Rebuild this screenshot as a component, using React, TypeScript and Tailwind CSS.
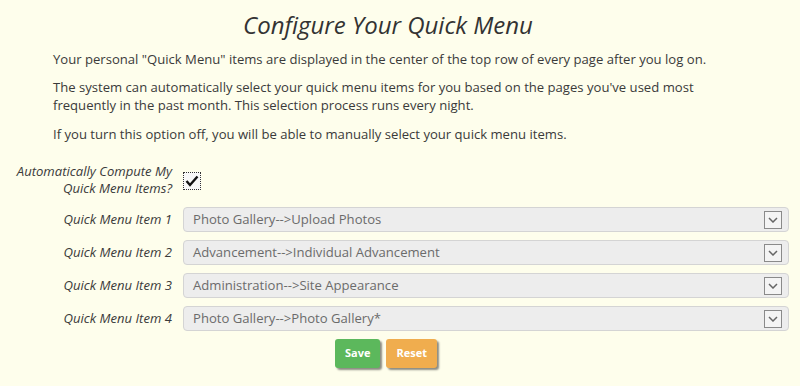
import React from 'react'

const items = [
  'Photo Gallery-->Upload Photos',
  'Advancement-->Individual Advancement',
  'Administration-->Site Appearance',
  'Photo Gallery-->Photo Gallery*',
]

function SelectBox({ value }: { value: string }) {
  return (
    <div className="flex-1 h-[25px] flex items-center justify-between rounded-[4px] border border-[#d4d4d4] bg-[#ededed] pl-[9px] pr-[6px]">
      <span className="text-[13.1px] text-[#6b6b6b]">{value}</span>
      <span className="w-[18px] h-[18px] border border-[#8a8a8a] bg-[#f4f4f4] flex items-center justify-center">
        <svg width="10" height="6" viewBox="0 0 10 6">
          <path d="M1 1 L5 5 L9 1" fill="none" stroke="#666" strokeWidth="1.5" />
        </svg>
      </span>
    </div>
  )
}

export default function App() {
  return (
    <div className="w-[800px] h-[386px] bg-[#fefeec] text-[#3a3a3a] overflow-hidden" style={{ fontFamily: '"Open Sans", "DejaVu Sans", sans-serif' }}>
      <h1 className="pt-[10px] pr-[24px] text-center italic text-[24px] leading-[30px] text-[#333]">Configure Your Quick Menu</h1>
      <div className="pl-[53px] pr-[60px] text-[13.1px] leading-[18px]">
        <p className="mt-[10px]">Your personal "Quick Menu" items are displayed in the center of the top row of every page after you log on.</p>
        <p className="mt-[10px] w-[670px]">The system can automatically select your quick menu items for you based on the pages you've used most frequently in the past month. This selection process runs every night.</p>
        <p className="mt-[11px]">If you turn this option off, you will be able to manually select your quick menu items.</p>
      </div>

      <div className="mt-[20px] pr-[11px]">
        <div className="flex items-start">
          <div className="w-[172px] text-right italic text-[13.1px] leading-[17px]">
            Automatically Compute My<br />Quick Menu Items?
          </div>
          <div className="ml-[11px] mt-[9px] w-[18px] h-[18px] border border-dotted border-[#333] bg-[#f8f8f8] flex items-center justify-center">
            <svg width="14" height="12" viewBox="0 0 14 12">
              <path d="M1.5 6 L5 10 L12.5 1.5" fill="none" stroke="#111" strokeWidth="2.4" />
            </svg>
          </div>
        </div>

        <div className="mt-[10px] flex flex-col gap-[8px]">
          {items.map((v, i) => (
            <div key={i} className="flex items-center">
              <div className="w-[172px] text-right italic text-[13.1px]">Quick Menu Item {i + 1}</div>
              <div className="ml-[11px] flex-1 flex">
                <SelectBox value={v} />
              </div>
            </div>
          ))}
        </div>

        <div className="mt-[8px] flex gap-[6px] pl-[335px]">
          <button className="h-[29px] px-[10px] rounded-[3px] bg-[#5cb85c] text-white text-[11px] font-bold shadow-[2px_2px_2px_rgba(0,0,0,0.45)]">Save</button>
          <button className="h-[29px] px-[10px] rounded-[3px] bg-[#f0ad4e] text-white text-[11px] font-bold shadow-[2px_2px_2px_rgba(0,0,0,0.45)]">Reset</button>
        </div>
      </div>
    </div>
  )
}
